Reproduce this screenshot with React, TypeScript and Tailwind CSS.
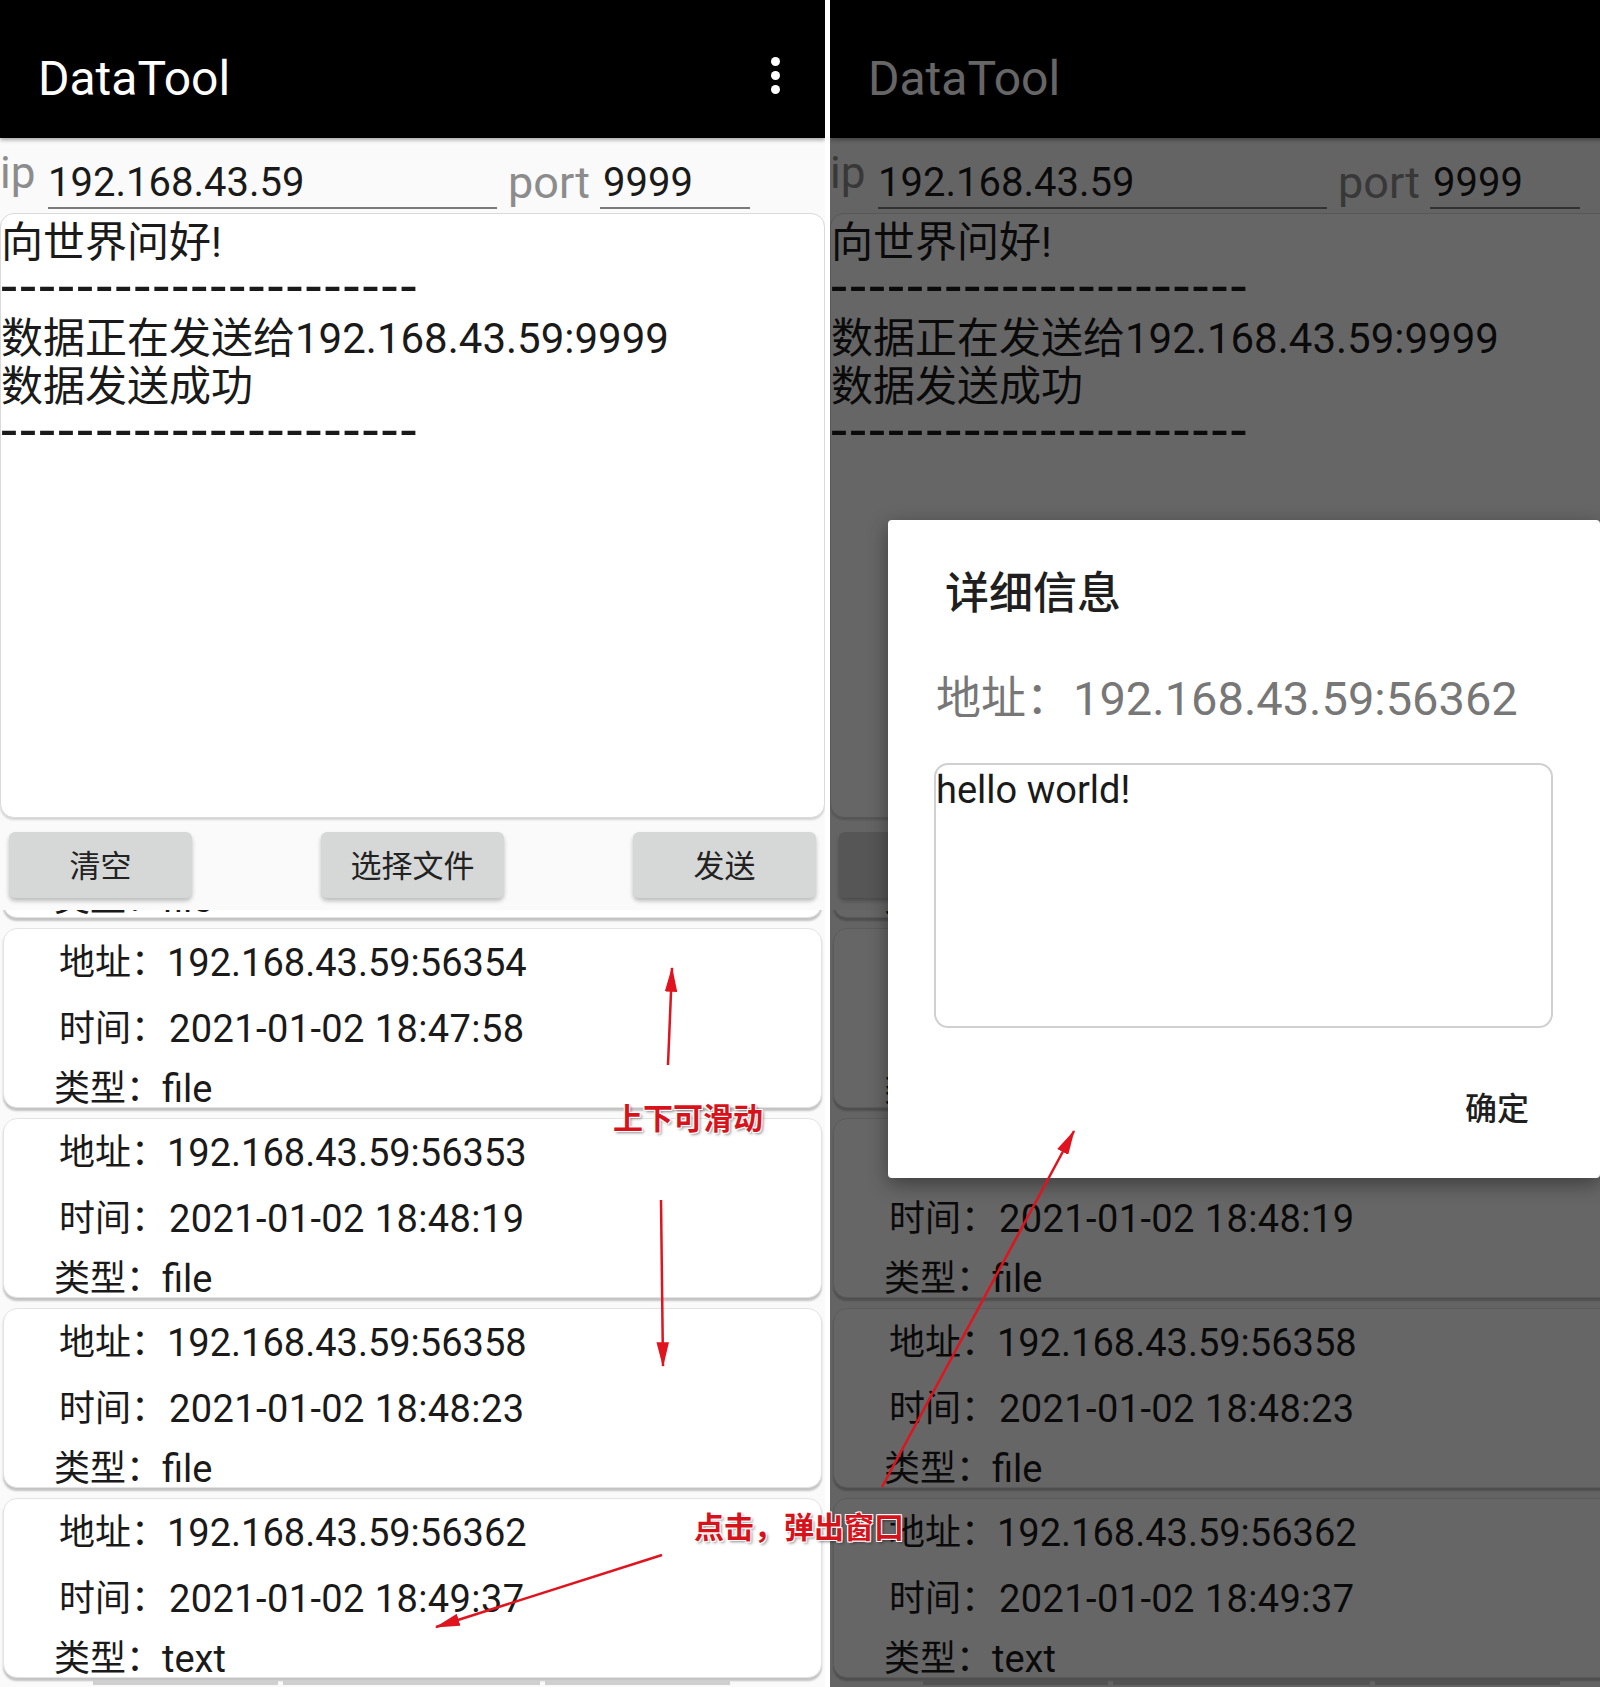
import React from 'react';

const font = "font-['Roboto','Noto_Sans_CJK_SC',sans-serif]";

type Entry = { port: string; time: string; type: string };

const entries: Entry[] = [
  { port: '56350', time: '2021-01-02 18:47:50', type: 'file' },
  { port: '56354', time: '2021-01-02 18:47:58', type: 'file' },
  { port: '56353', time: '2021-01-02 18:48:19', type: 'file' },
  { port: '56358', time: '2021-01-02 18:48:23', type: 'file' },
  { port: '56362', time: '2021-01-02 18:49:37', type: 'text' },
];

const dashes = '----------------------';

function EntryCard({ entry }: { entry: Entry }) {
  return (
    <div className="h-[180px] mb-[10px] bg-white rounded-[14px] border border-[#e3e3e3] shadow-[0_3px_2px_rgba(0,0,0,0.22)] pl-[55px] pt-[10px] text-[#1a1a1a]">
      <div className="flex items-center h-[48px] whitespace-nowrap">
        <span className="w-[108px] text-[36px]">地址：</span>
        <span className="text-[38px]">192.168.43.59:{entry.port}</span>
      </div>
      <div className="flex items-center h-[48px] mt-[18px] whitespace-nowrap">
        <span className="w-[110px] text-[36px]">时间：</span>
        <span className="text-[38px] tracking-[0.4px]">{entry.time}</span>
      </div>
      <div className="flex items-center h-[40px] mt-[16px] -ml-[5px] whitespace-nowrap">
        <span className="w-[108px] text-[36px]">类型：</span>
        <span className="text-[38px]">{entry.type}</span>
      </div>
    </div>
  );
}

function Phone({ menu }: { menu: boolean }) {
  return (
    <div className={`w-[825px] h-[1687px] shrink-0 bg-[#fafafa] flex flex-col overflow-hidden ${font}`}>
      <header className="h-[138px] shrink-0 bg-black flex items-center justify-between pl-[38px] pr-[45px] pt-[20px] shadow-[0_2px_4px_rgba(0,0,0,0.35)]">
        <span className="text-white text-[48px] leading-none">DataTool</span>
        {menu && (
          <div className="flex flex-col gap-[5px] -mt-[8px]">
            <span className="w-[9px] h-[9px] rounded-full bg-white" />
            <span className="w-[9px] h-[9px] rounded-full bg-white" />
            <span className="w-[9px] h-[9px] rounded-full bg-white" />
          </div>
        )}
      </header>

      <div className="h-[75px] shrink-0 flex items-end pb-[4px] whitespace-nowrap">
        <span className="self-end mb-[14px] w-[48px] text-[44px] leading-[44px] text-[#8c8c8c]">ip</span>
        <div className="w-[449px] border-b-2 border-[#7a7a7a] text-[40px] leading-[48px] pt-[2px] text-[#1a1a1a]">
          192.168.43.59
        </div>
        <span className="ml-[11px] w-[92px] text-[45px] leading-[48px] text-[#8c8c8c] mb-[2px]">port</span>
        <div className="w-[150px] border-b-2 border-[#7a7a7a] text-[40px] leading-[48px] pt-[2px] pl-[3px] text-[#1a1a1a]">
          9999
        </div>
      </div>

      <div className="h-[605px] shrink-0 bg-white rounded-[14px] border border-[#dadada] shadow-[0_2px_2px_rgba(0,0,0,0.15)] pt-[5px] text-[42px] leading-[48px] text-[#1a1a1a] whitespace-nowrap">
        <div>向世界问好!</div>
        <div className="text-[58px] tracking-[3px] h-[48px] leading-[38px]">{dashes}</div>
        <div>数据正在发送给192.168.43.59:9999</div>
        <div>数据发送成功</div>
        <div className="text-[58px] tracking-[3px] h-[48px] leading-[38px]">{dashes}</div>
      </div>

      <div className="mt-[14px] h-[66px] shrink-0 flex justify-between px-[9px]">
        {['清空', '选择文件', '发送'].map((label) => (
          <div
            key={label}
            className="w-[183px] bg-[#d6d7d7] rounded-[6px] shadow-[0_3px_4px_rgba(0,0,0,0.25)] flex items-center justify-center pt-[5px] text-[31px] text-[#222]"
          >
            {label}
          </div>
        ))}
      </div>

      <div className="flex-1 overflow-hidden mt-[12px] px-[3px]">
        <div className="-mt-[172px]">
          {entries.map((e) => (
            <EntryCard key={e.port} entry={e} />
          ))}
        </div>
      </div>
      <div className="h-[7px] shrink-0 flex pl-[93px] gap-[5px] -mt-[7px]">
        <span className="w-[185px] h-[5px] bg-[#cfcfcf]" />
        <span className="w-[257px] h-[5px] bg-[#cfcfcf]" />
        <span className="w-[185px] h-[5px] bg-[#cfcfcf]" />
      </div>
    </div>
  );
}

function DetailDialog() {
  return (
    <div className={`absolute left-[58px] top-[520px] w-[712px] h-[658px] bg-white rounded-[4px] shadow-[0_6px_20px_rgba(0,0,0,0.4)] flex flex-col ${font}`}>
      <div className="mt-[48px] pl-[57px] text-[44px] leading-[52px] font-medium text-[#1f1f1f]">详细信息</div>
      <div className="mt-[51px] pl-[48px] flex items-center h-[56px] text-[#777] whitespace-nowrap">
        <span className="w-[137px] text-[45px]">地址：</span>
        <span className="text-[47px]">192.168.43.59:56362</span>
      </div>
      <div className="mt-[36px] ml-[46px] w-[619px] h-[265px] rounded-[14px] border-2 border-[#d0d0d0] text-[38px] leading-[50px] text-[#1a1a1a]">
        hello world!
      </div>
      <div className="mt-[61px] self-end mr-[71px] text-[32px] leading-[40px] font-medium text-[#1f1f1f]">确定</div>
    </div>
  );
}

function Annotations() {
  const red = '#e0141e';
  return (
    <div className="absolute inset-0 pointer-events-none">
      <svg width="1600" height="1687" className="absolute inset-0">
        <defs>
          <marker id="head" viewBox="0 0 20 10" refX="19" refY="5" markerWidth="10" markerHeight="5" orient="auto" markerUnits="strokeWidth">
            <path d="M0 0 L20 5 L0 10 Z" fill={red} />
          </marker>
        </defs>
        <line x1="668" y1="1065" x2="672" y2="968" stroke={red} strokeWidth="2.5" markerEnd="url(#head)" />
        <line x1="661" y1="1200" x2="663" y2="1366" stroke={red} strokeWidth="2.5" markerEnd="url(#head)" />
        <line x1="662" y1="1555" x2="436" y2="1627" stroke={red} strokeWidth="2.5" markerEnd="url(#head)" />
        <line x1="882" y1="1487" x2="1074" y2="1131" stroke={red} strokeWidth="2.5" markerEnd="url(#head)" />
      </svg>
      <span className="absolute left-[613px] top-[1096px] text-[30px] leading-[40px] font-bold text-[#d8121b] font-['Noto_Sans_CJK_SC',sans-serif] [text-shadow:-1px_-1px_0_#fff,1px_-1px_0_#fff,-1px_1px_0_#fff,1px_1px_0_#fff,2px_2px_3px_rgba(0,0,0,0.45)]">
        上下可滑动
      </span>
      <span className="absolute left-[694px] top-[1505px] text-[30px] leading-[40px] font-bold text-[#d8121b] font-['Noto_Sans_CJK_SC',sans-serif] whitespace-nowrap [text-shadow:-1px_-1px_0_#fff,1px_-1px_0_#fff,-1px_1px_0_#fff,1px_1px_0_#fff,2px_2px_3px_rgba(0,0,0,0.45)]">
        点击，弹出窗口
      </span>
    </div>
  );
}

export default function App() {
  return (
    <div className="relative w-[1600px] h-[1687px] bg-white overflow-hidden flex">
      <Phone menu />
      <div className="w-[5px] shrink-0 bg-white" />
      <div className="relative w-[770px] h-[1687px] overflow-hidden shrink-0">
        <Phone menu={false} />
        <div className="absolute inset-0 bg-black/60" />
        <DetailDialog />
      </div>
      <Annotations />
    </div>
  );
}
